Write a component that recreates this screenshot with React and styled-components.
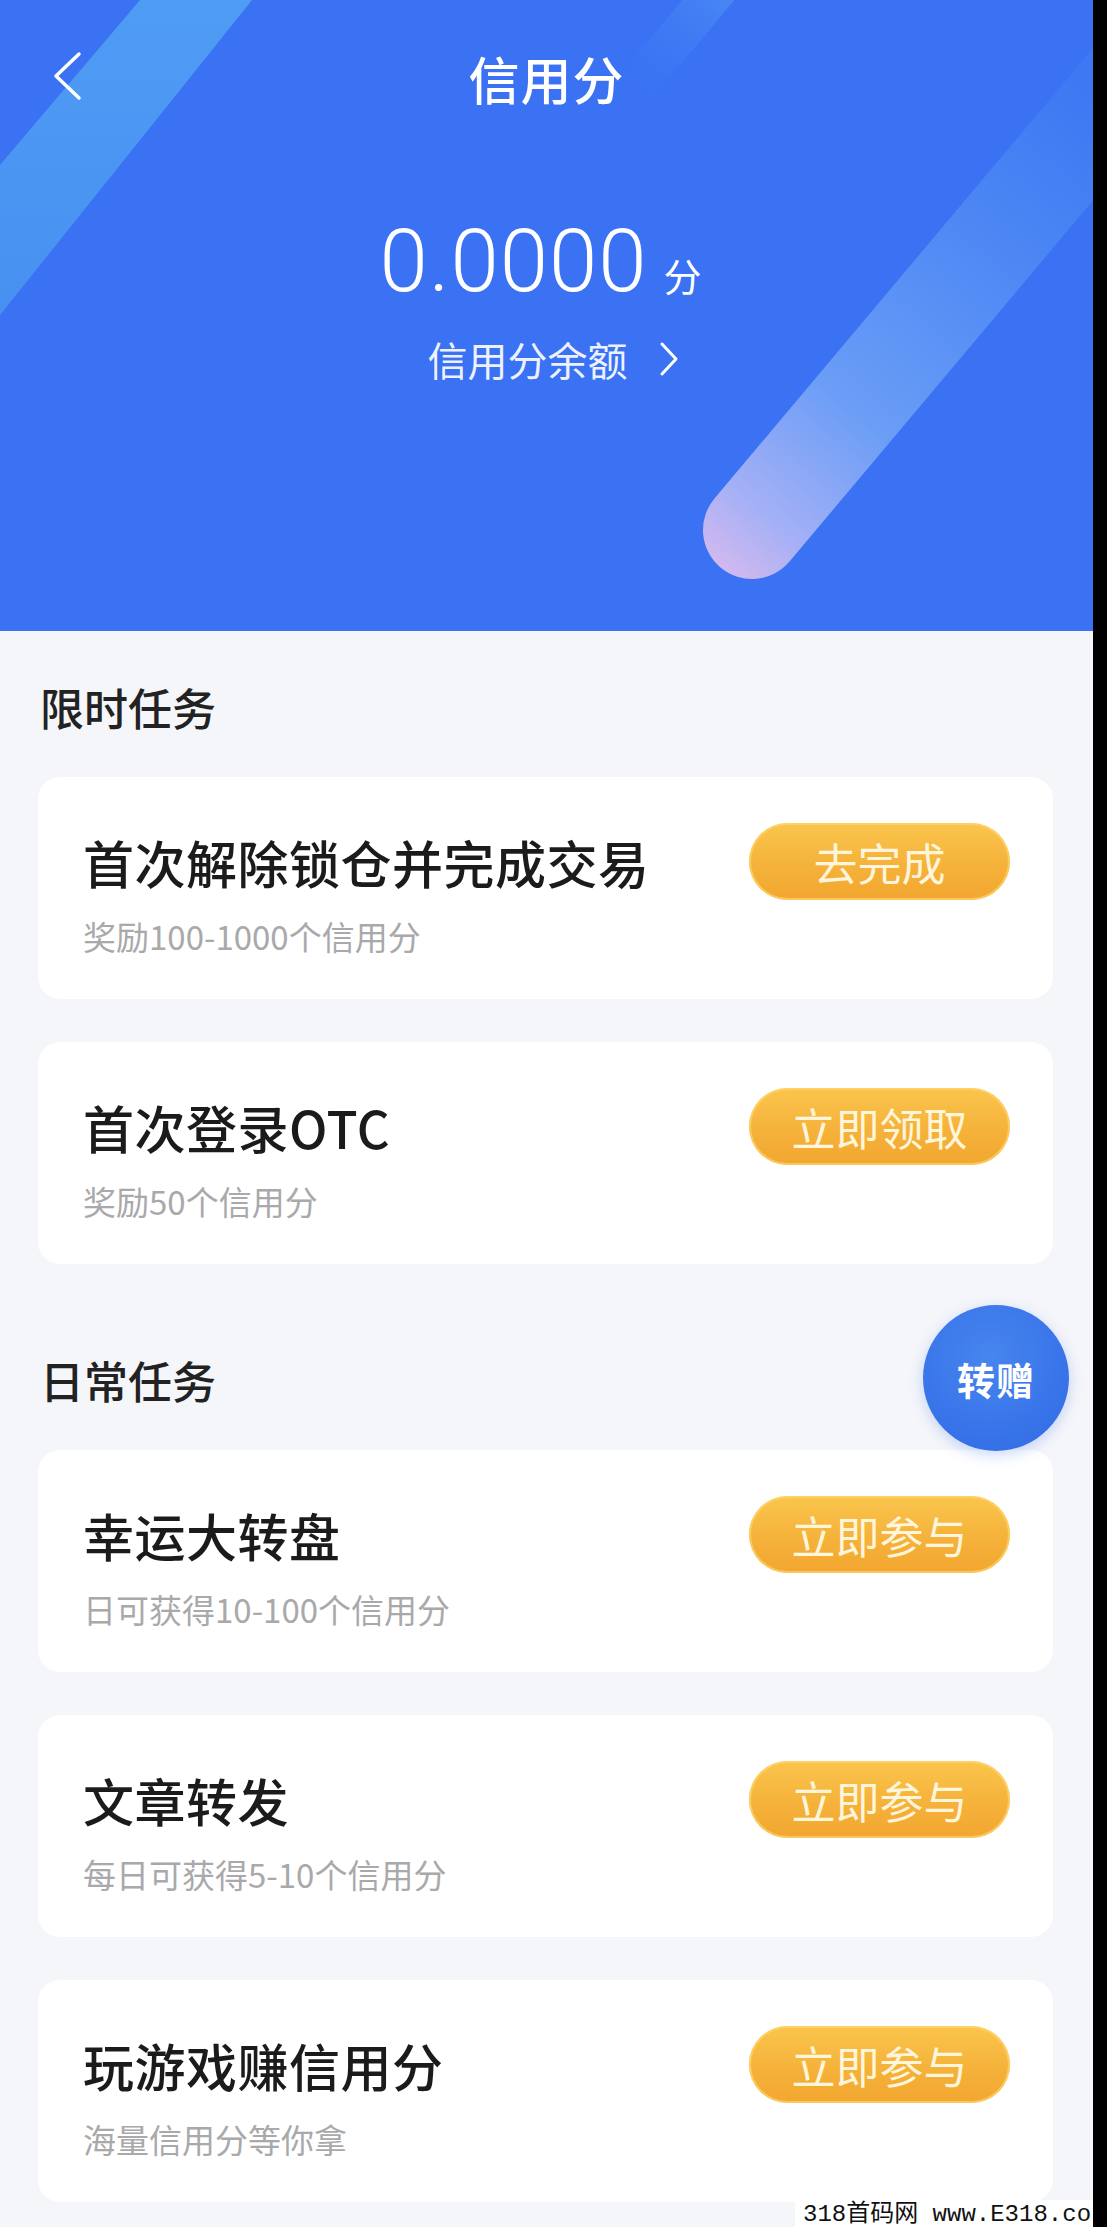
import React from "react";
import styled, { createGlobalStyle } from "styled-components";

const limitedTasks = [
  { title: "首次解除锁仓并完成交易", desc: "奖励100-1000个信用分", action: "去完成" },
  { title: "首次登录OTC", desc: "奖励50个信用分", action: "立即领取" },
];

const dailyTasks = [
  { title: "幸运大转盘", desc: "日可获得10-100个信用分", action: "立即参与" },
  { title: "文章转发", desc: "每日可获得5-10个信用分", action: "立即参与" },
  { title: "玩游戏赚信用分", desc: "海量信用分等你拿", action: "立即参与" },
];

const App = () => {
  return (
    <>
      <GlobalStyle />
      <Page>
        <Header>
          <HeaderArt />
          <NavBar>
            <BackButton aria-label="back">
              <svg width="30" height="50" viewBox="0 0 30 50">
                <polyline
                  points="27,3 4,25 27,47"
                  fill="none"
                  stroke="#fff"
                  strokeWidth="3.5"
                  strokeLinecap="round"
                  strokeLinejoin="round"
                />
              </svg>
            </BackButton>
            <NavTitle>信用分</NavTitle>
            <span />
          </NavBar>
          <Amount>
            <Value>0.0000</Value>
            <Unit>分</Unit>
          </Amount>
          <BalanceLink>
            信用分余额
            <svg width="22" height="36" viewBox="0 0 22 36">
              <polyline
                points="4,3 18,18 4,33"
                fill="none"
                stroke="#fff"
                strokeWidth="3"
                strokeLinecap="round"
                strokeLinejoin="round"
              />
            </svg>
          </BalanceLink>
        </Header>

        <Content>
          <Section>
            <SectionTitle>限时任务</SectionTitle>
            <CardList>
              {limitedTasks.map((t) => (
                <TaskCard key={t.title} {...t} />
              ))}
            </CardList>
          </Section>
          <Section>
            <SectionTitle>日常任务</SectionTitle>
            <CardList>
              {dailyTasks.map((t) => (
                <TaskCard key={t.title} {...t} />
              ))}
            </CardList>
          </Section>
        </Content>

        <GiftButton>转赠</GiftButton>
        <Watermark>318首码网 www.E318.co</Watermark>
      </Page>
    </>
  );
};

const TaskCard = ({ title, desc, action }) => (
  <Card>
    <CardRow>
      <CardTitle>{title}</CardTitle>
      <ActionButton>{action}</ActionButton>
    </CardRow>
    <CardDesc>{desc}</CardDesc>
  </Card>
);

// decorative streaks behind the header
const HeaderArt = () => (
  <ArtLayer viewBox="0 0 1093 631" preserveAspectRatio="none">
    <defs>
      <linearGradient id="leftBand" x1="0" y1="0" x2="0" y2="1">
        <stop offset="0" stopColor="#4f9cf4" />
        <stop offset="1" stopColor="#4790f1" />
      </linearGradient>
      <linearGradient
        id="rightBand"
        gradientUnits="userSpaceOnUse"
        x1="720"
        y1="570"
        x2="1110"
        y2="110"
      >
        <stop offset="0" stopColor="#d2b9ef" />
        <stop offset="0.12" stopColor="#a4b0f6" />
        <stop offset="0.35" stopColor="#6a9df6" />
        <stop offset="0.7" stopColor="#4d88f4" />
        <stop offset="1" stopColor="#3e78f3" />
      </linearGradient>
      <linearGradient
        id="topBand"
        gradientUnits="userSpaceOnUse"
        x1="720"
        y1="-20"
        x2="620"
        y2="110"
      >
        <stop offset="0" stopColor="#5a9ff5" stopOpacity="0.5" />
        <stop offset="1" stopColor="#3a72f3" stopOpacity="0" />
      </linearGradient>
    </defs>
    <polygon points="140,0 252,0 0,315 0,165" fill="url(#leftBand)" />
    <line
      x1="625"
      y1="100"
      x2="725"
      y2="-20"
      stroke="url(#topBand)"
      strokeWidth="40"
      strokeLinecap="round"
    />
    <line
      x1="752"
      y1="530"
      x2="1210"
      y2="-15"
      stroke="url(#rightBand)"
      strokeWidth="98"
      strokeLinecap="round"
    />
  </ArtLayer>
);

const GlobalStyle = createGlobalStyle`
  html, body {
    margin: 0;
    padding: 0;
    background: #000;
  }
  body {
    font-family: "Noto Sans CJK SC", "Noto Sans", sans-serif;
  }
  * {
    box-sizing: border-box;
  }
`;

const Page = styled.div`
  position: relative;
  width: 1093px;
  min-height: 2227px;
  background: #f5f6fa;
  overflow: hidden;
`;

const Header = styled.header`
  position: relative;
  height: 631px;
  background: #3a72f3;
  overflow: hidden;
  color: #fff;
  & > *:not(svg) {
    position: relative;
    z-index: 1;
  }
`;

const ArtLayer = styled.svg`
  position: absolute;
  inset: 0;
  width: 100%;
  height: 100%;
`;

const NavBar = styled.div`
  height: 156px;
  display: grid;
  grid-template-columns: 1fr auto 1fr;
  align-items: center;
  padding: 0 52px;
`;

const BackButton = styled.div`
  display: flex;
  align-items: center;
  height: 50px;
  margin-top: -4px;
`;

const NavTitle = styled.h1`
  margin: 0;
  font-size: 51px;
  line-height: 1;
  font-weight: 500;
  letter-spacing: 1px;
`;

const Amount = styled.div`
  display: flex;
  justify-content: center;
  align-items: baseline;
  margin-top: 62px;
  padding-right: 12px;
`;

const Value = styled.span`
  font-family: Roboto, "Noto Sans", sans-serif;
  font-weight: 300;
  font-size: 87px;
  line-height: 87px;
  letter-spacing: 1px;
`;

const Unit = styled.span`
  font-size: 38px;
  margin-left: 16px;
`;

const BalanceLink = styled.div`
  display: flex;
  justify-content: center;
  align-items: center;
  gap: 30px;
  margin-top: 34px;
  padding-left: 14px;
  font-size: 40px;
  line-height: 40px;
  color: rgba(255, 255, 255, 0.92);
`;

const Content = styled.main`
  padding: 0 40px 27px 38px;
`;

const Section = styled.section`
  padding-top: 46px;
  & + & {
    padding-top: 86px;
  }
`;

const SectionTitle = styled.h2`
  margin: 0 0 40px 2px;
  font-size: 44px;
  line-height: 60px;
  font-weight: 500;
  color: #222;
`;

const CardList = styled.div`
  display: flex;
  flex-direction: column;
  gap: 43px;
`;

const Card = styled.div`
  height: 222px;
  background: #fff;
  border-radius: 22px;
  padding: 46px 43px 0 45px;
`;

const CardRow = styled.div`
  display: flex;
  align-items: center;
  justify-content: space-between;
`;

const CardTitle = styled.div`
  font-size: 51px;
  line-height: 60px;
  font-weight: 500;
  letter-spacing: 0.5px;
  color: #1b1b1b;
`;

const ActionButton = styled.button`
  width: 261px;
  height: 77px;
  border: none;
  border-radius: 39px;
  background: linear-gradient(180deg, #fac54d 0%, #f5b23a 55%, #f2a630 100%);
  box-shadow: inset 0 0 0 2px rgba(255, 214, 110, 0.7);
  color: #fff5da;
  font-family: "Noto Sans CJK SC", sans-serif;
  font-size: 44px;
  line-height: 1;
  padding: 0;
`;

const CardDesc = styled.div`
  margin-top: 16px;
  font-size: 33px;
  line-height: 40px;
  color: #a9a9ab;
`;

const GiftButton = styled.div`
  position: absolute;
  left: 923px;
  top: 1305px;
  width: 146px;
  height: 146px;
  border-radius: 50%;
  background: radial-gradient(circle at 45% 35%, #4785ee 0%, #3a76ea 55%, #2f69e2 100%);
  box-shadow: 0 4px 14px rgba(40, 100, 230, 0.25);
  display: flex;
  align-items: center;
  justify-content: center;
  color: #fff;
  font-size: 38px;
  font-weight: 700;
  letter-spacing: 1px;
`;

const Watermark = styled.div`
  position: absolute;
  left: 795px;
  bottom: 0;
  width: 298px;
  height: 29px;
  padding-left: 8px;
  background: #fff;
  color: #111;
  font-family: "Liberation Mono", "Noto Sans CJK SC", monospace;
  font-size: 24px;
  line-height: 29px;
  white-space: nowrap;
`;

export default App;
